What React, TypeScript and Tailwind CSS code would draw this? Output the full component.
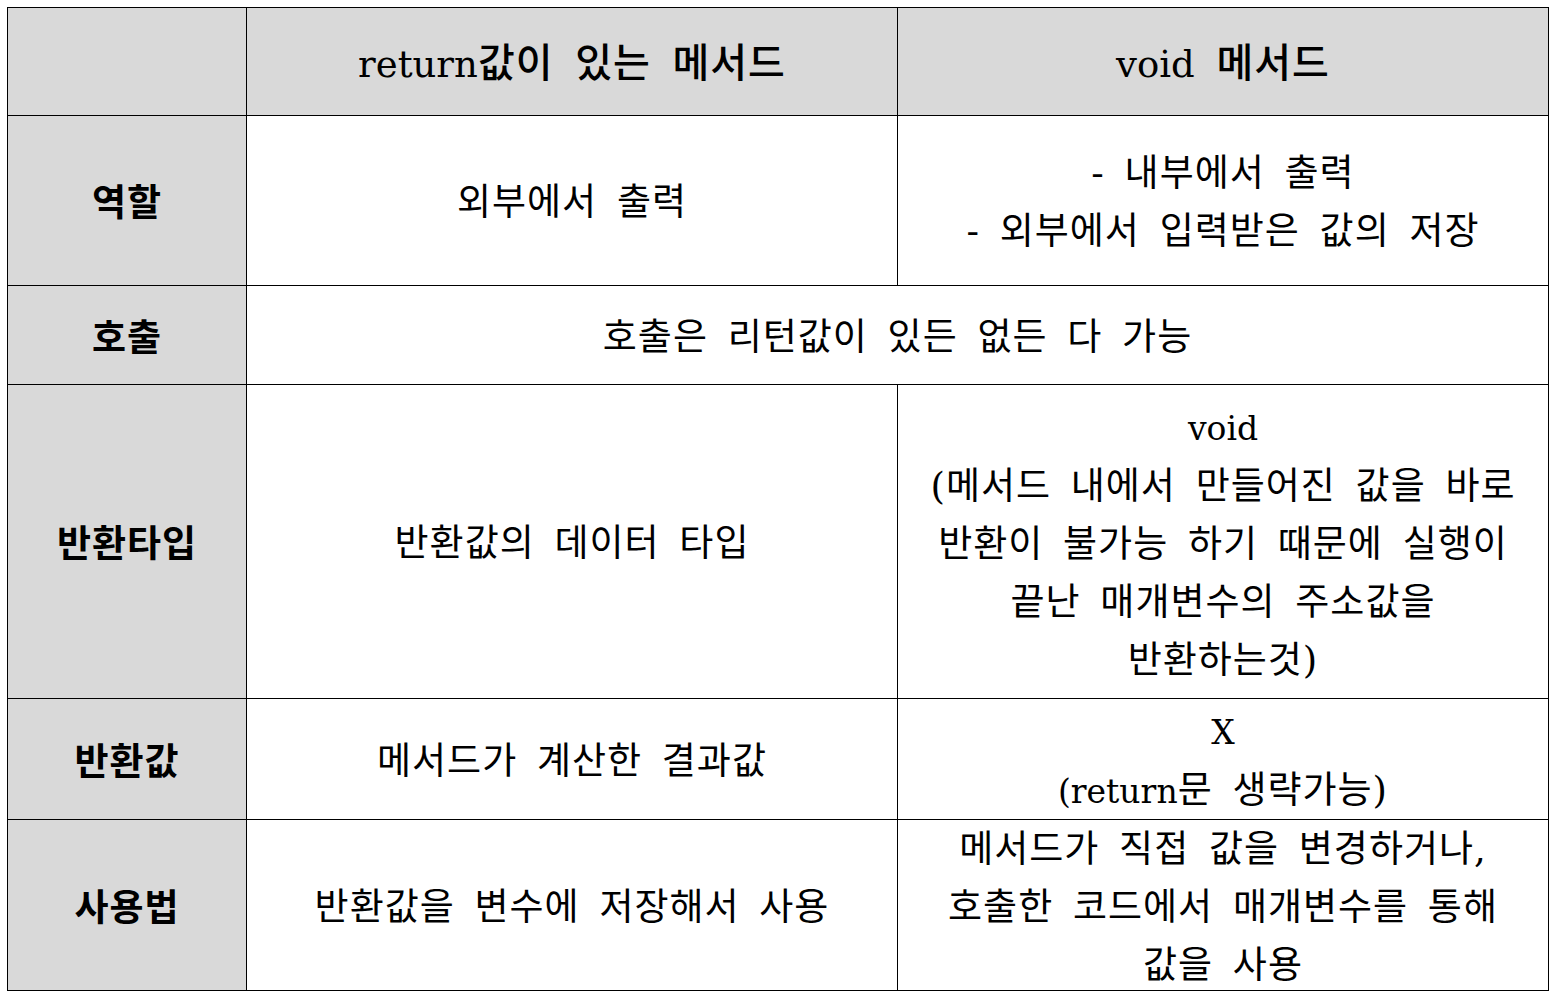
import React from "react";

const font = {
  fontFamily: '"DejaVu Serif", "Noto Sans CJK KR", serif',
};

function Cell({
  children,
  gray,
  bold,
  className = "",
}: {
  children?: React.ReactNode;
  gray?: boolean;
  bold?: boolean;
  className?: string;
}) {
  return (
    <div
      className={`flex items-center justify-center text-center text-black leading-[58px] ${
        gray ? "bg-[#d9d9d9]" : "bg-white"
      } ${bold ? "font-bold" : ""} ${className}`}
    >
      <div className="pt-[5px]">{children}</div>
    </div>
  );
}

function L({ children }: { children: React.ReactNode }) {
  return <span className="tracking-normal text-[33px]">{children}</span>;
}

function LH({ children }: { children: React.ReactNode }) {
  return <span className="tracking-normal text-[37px]">{children}</span>;
}

export default function App() {
  return (
    <div className="w-[1558px] h-[1003px] bg-white pl-[7px] pt-[7px]" style={font}>
      <div className="grid grid-cols-[238px_650px_650px] grid-rows-[107px_169px_98px_313px_120px_170px] gap-px bg-black p-px w-[1542px] text-[37px] tracking-[1px] [word-spacing:7px]">
        <Cell gray />
        <Cell gray className="text-[40px] font-medium [word-spacing:8px]">
          <LH>return</LH>값이 있는 메서드
        </Cell>
        <Cell gray className="text-[40px] font-medium [word-spacing:8px]">
          <LH>void</LH> 메서드
        </Cell>

        <Cell gray bold>역할</Cell>
        <Cell>외부에서 출력</Cell>
        <Cell>
          - 내부에서 출력
          <br />- 외부에서 입력받은 값의 저장
        </Cell>

        <Cell gray bold>호출</Cell>
        <Cell className="col-span-2">호출은 리턴값이 있든 없든 다 가능</Cell>

        <Cell gray bold>반환타입</Cell>
        <Cell>반환값의 데이터 타입</Cell>
        <Cell>
          <L>void</L>
          <br />
          (메서드 내에서 만들어진 값을 바로
          <br />
          반환이 불가능 하기 때문에 실행이
          <br />
          끝난 매개변수의 주소값을
          <br />
          반환하는것)
        </Cell>

        <Cell gray bold>반환값</Cell>
        <Cell>메서드가 계산한 결과값</Cell>
        <Cell>
          <L>X</L>
          <br />
          <L>(return</L>문 생략가능)
        </Cell>

        <Cell gray bold>사용법</Cell>
        <Cell>반환값을 변수에 저장해서 사용</Cell>
        <Cell className="overflow-visible">
          메서드가 직접 값을 변경하거나,
          <br />
          호출한 코드에서 매개변수를 통해
          <br />
          값을 사용
        </Cell>
      </div>
    </div>
  );
}
